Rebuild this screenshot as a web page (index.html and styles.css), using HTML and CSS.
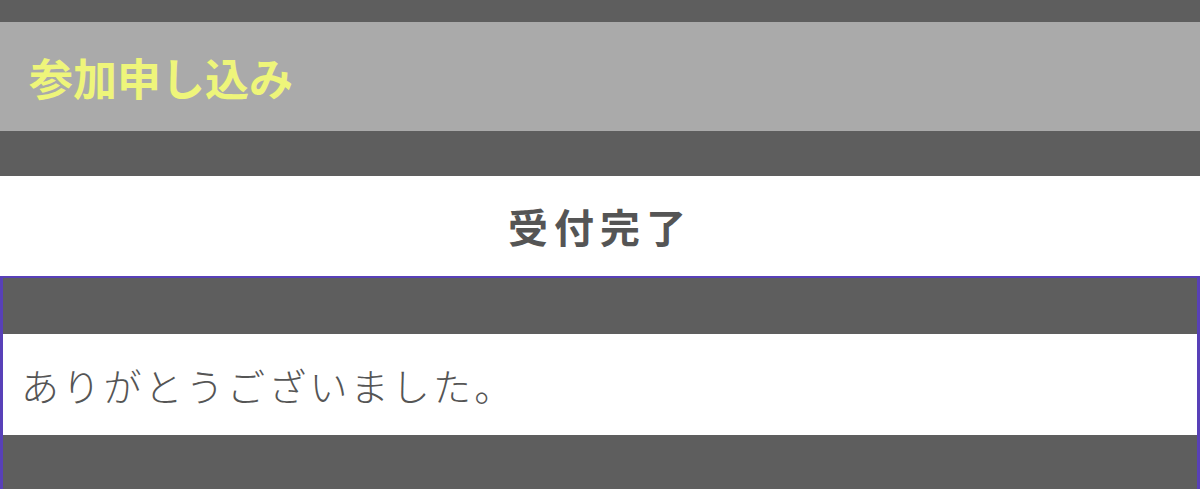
FILE: index.html
```html
<!DOCTYPE html>
<html lang="ja">
<head>
  <meta charset="UTF-8" />
  <meta name="viewport" content="width=device-width, initial-scale=1.0" />
  <title>参加申し込み</title>
  <link rel="stylesheet" href="styles.css">
</head>
<body>
  <header class="page-header">
    <h1>参加申し込み</h1>
  </header>

  <div class="status-title">受付完了</div>

  <section class="result-box">
    <div class="message-row">ありがとうございました。</div>
  </section>
</body>
</html>
```

FILE: styles.css
```css
body {
  font-family: "Noto Sans CJK JP", "Noto Sans", sans-serif;
  margin: 0;
  padding: 22px 0 0;
  background-color: #5e5e5e;
  color: #555;
}

.page-header {
  height: 109px;
  display: flex;
  align-items: center;
  padding: 0 29px;
  background-color: #aaaaaa;
  margin-bottom: 45px;
}

.page-header h1 {
  margin: 0;
  font-size: 44px;
  font-weight: bold;
  color: #eef57a;
}

.status-title {
  height: 100px;
  display: flex;
  align-items: center;
  justify-content: center;
  background-color: #fff;
  font-size: 40px;
  font-weight: bold;
  letter-spacing: 6px;
  color: #555;
}

.result-box {
  border: 3px solid #5840b8;
  border-top-width: 2px;
  border-bottom: none;
  padding: 56px 0 54px;
  background-color: #5e5e5e;
}

.message-row {
  height: 101px;
  display: flex;
  align-items: center;
  padding: 0 18px;
  background-color: #fff;
  font-size: 38px;
  font-weight: 300;
  letter-spacing: 3.2px;
  color: #555;
}
```
